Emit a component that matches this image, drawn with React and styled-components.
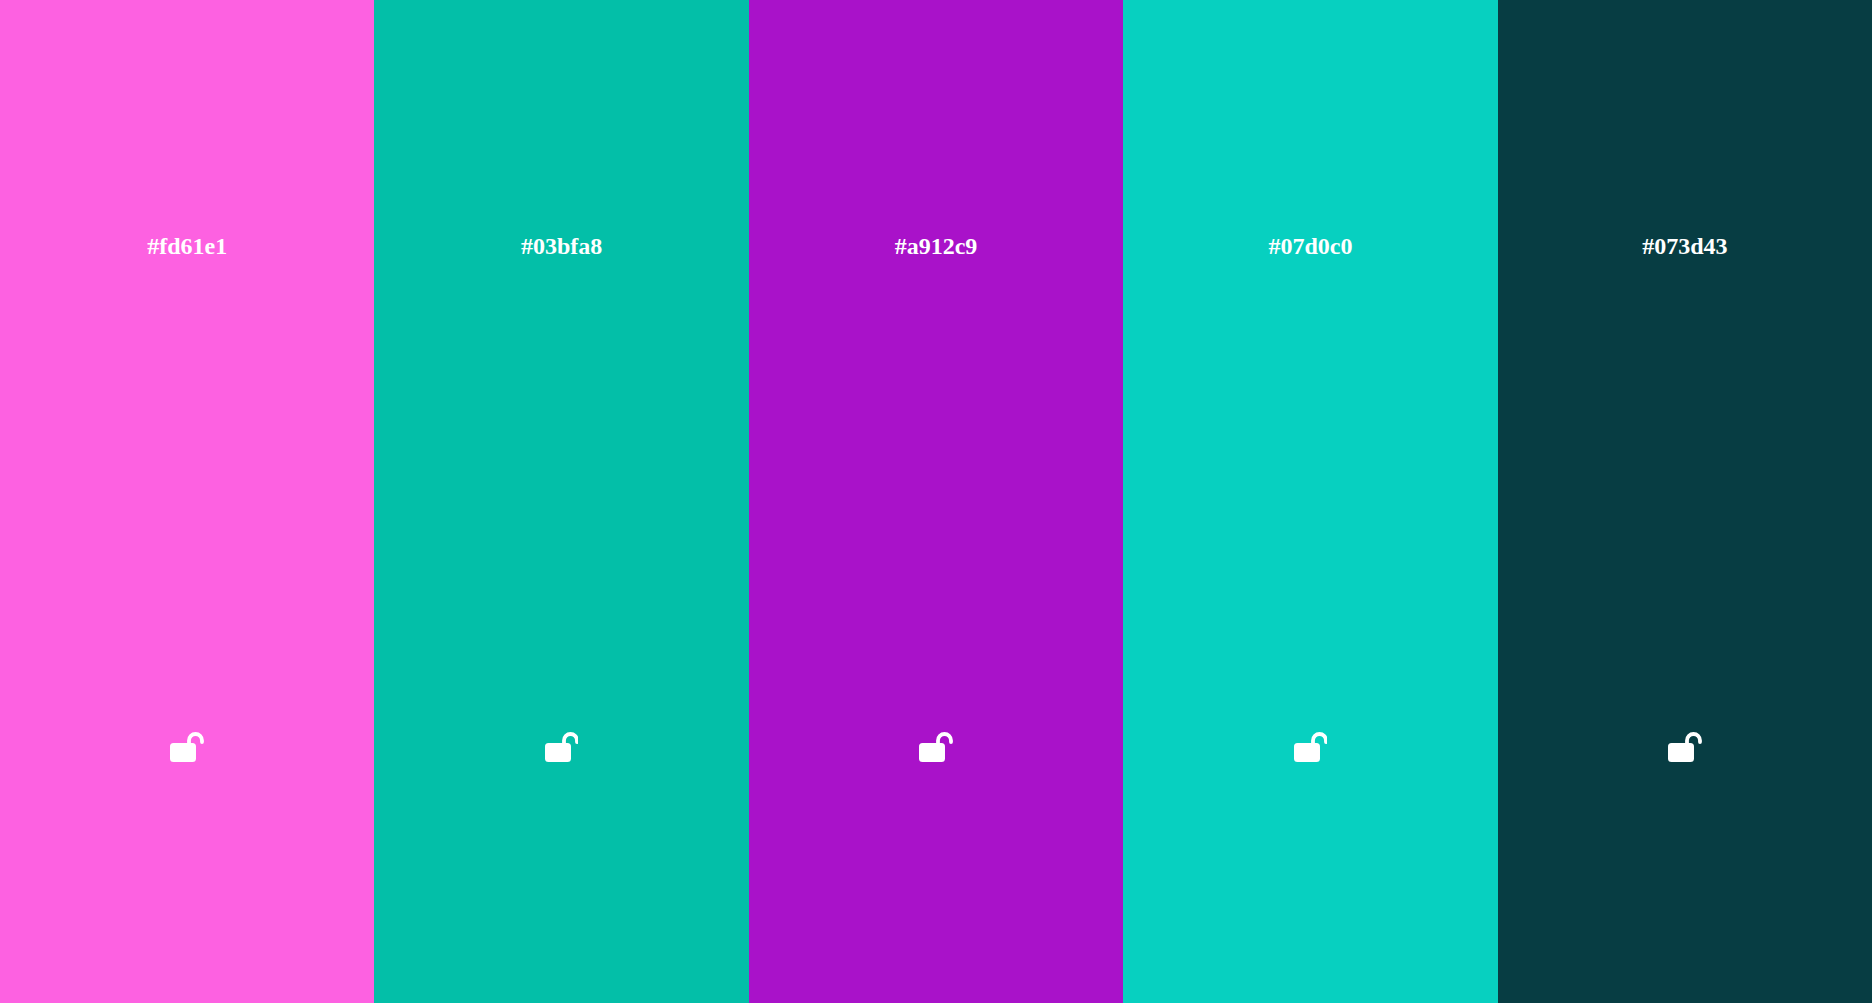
import React from "react";
import styled, { createGlobalStyle } from "styled-components";

const Global = createGlobalStyle`
  html, body { margin: 0; padding: 0; height: 100%; overflow: hidden; }
  #root { height: 100%; }
`;
const Palette = styled.main`
  display: flex;
  height: 1003px;
`;
const Swatch = styled.section`
  flex: 1 1 0;
  display: grid;
  grid-template-rows: 493px 510px;
  place-items: center;
  background: ${(p) => p.$color};
  color: #fff;
`;
const Hex = styled.h2`
  margin: 0;
  font-family: "Liberation Serif", serif;
  font-size: 24px;
  font-weight: 700;
`;
const LockButton = styled.div`
  display: flex;
  color: #fff;
`;
const UnlockIcon = () => (
  <svg width="33.6" height="32" viewBox="0 0 33.6 32" fill="none">
    <rect x="0" y="11" width="26" height="19" rx="3.5" fill="currentColor" />
    <path d="M19 13V8.5a6.5 6.5 0 0 1 13 0V10" stroke="currentColor" strokeWidth="3.8" strokeLinecap="round" />
  </svg>
);
const colors = ["#fd61e1", "#03bfa8", "#a912c9", "#07d0c0", "#073d43"];
export default function App() {
  return (
    <Palette>
      <Global />
      {colors.map((c) => (
        <Swatch key={c} $color={c}>
          <Hex>{c}</Hex>
          <LockButton><UnlockIcon /></LockButton>
        </Swatch>
      ))}
    </Palette>
  );
}
